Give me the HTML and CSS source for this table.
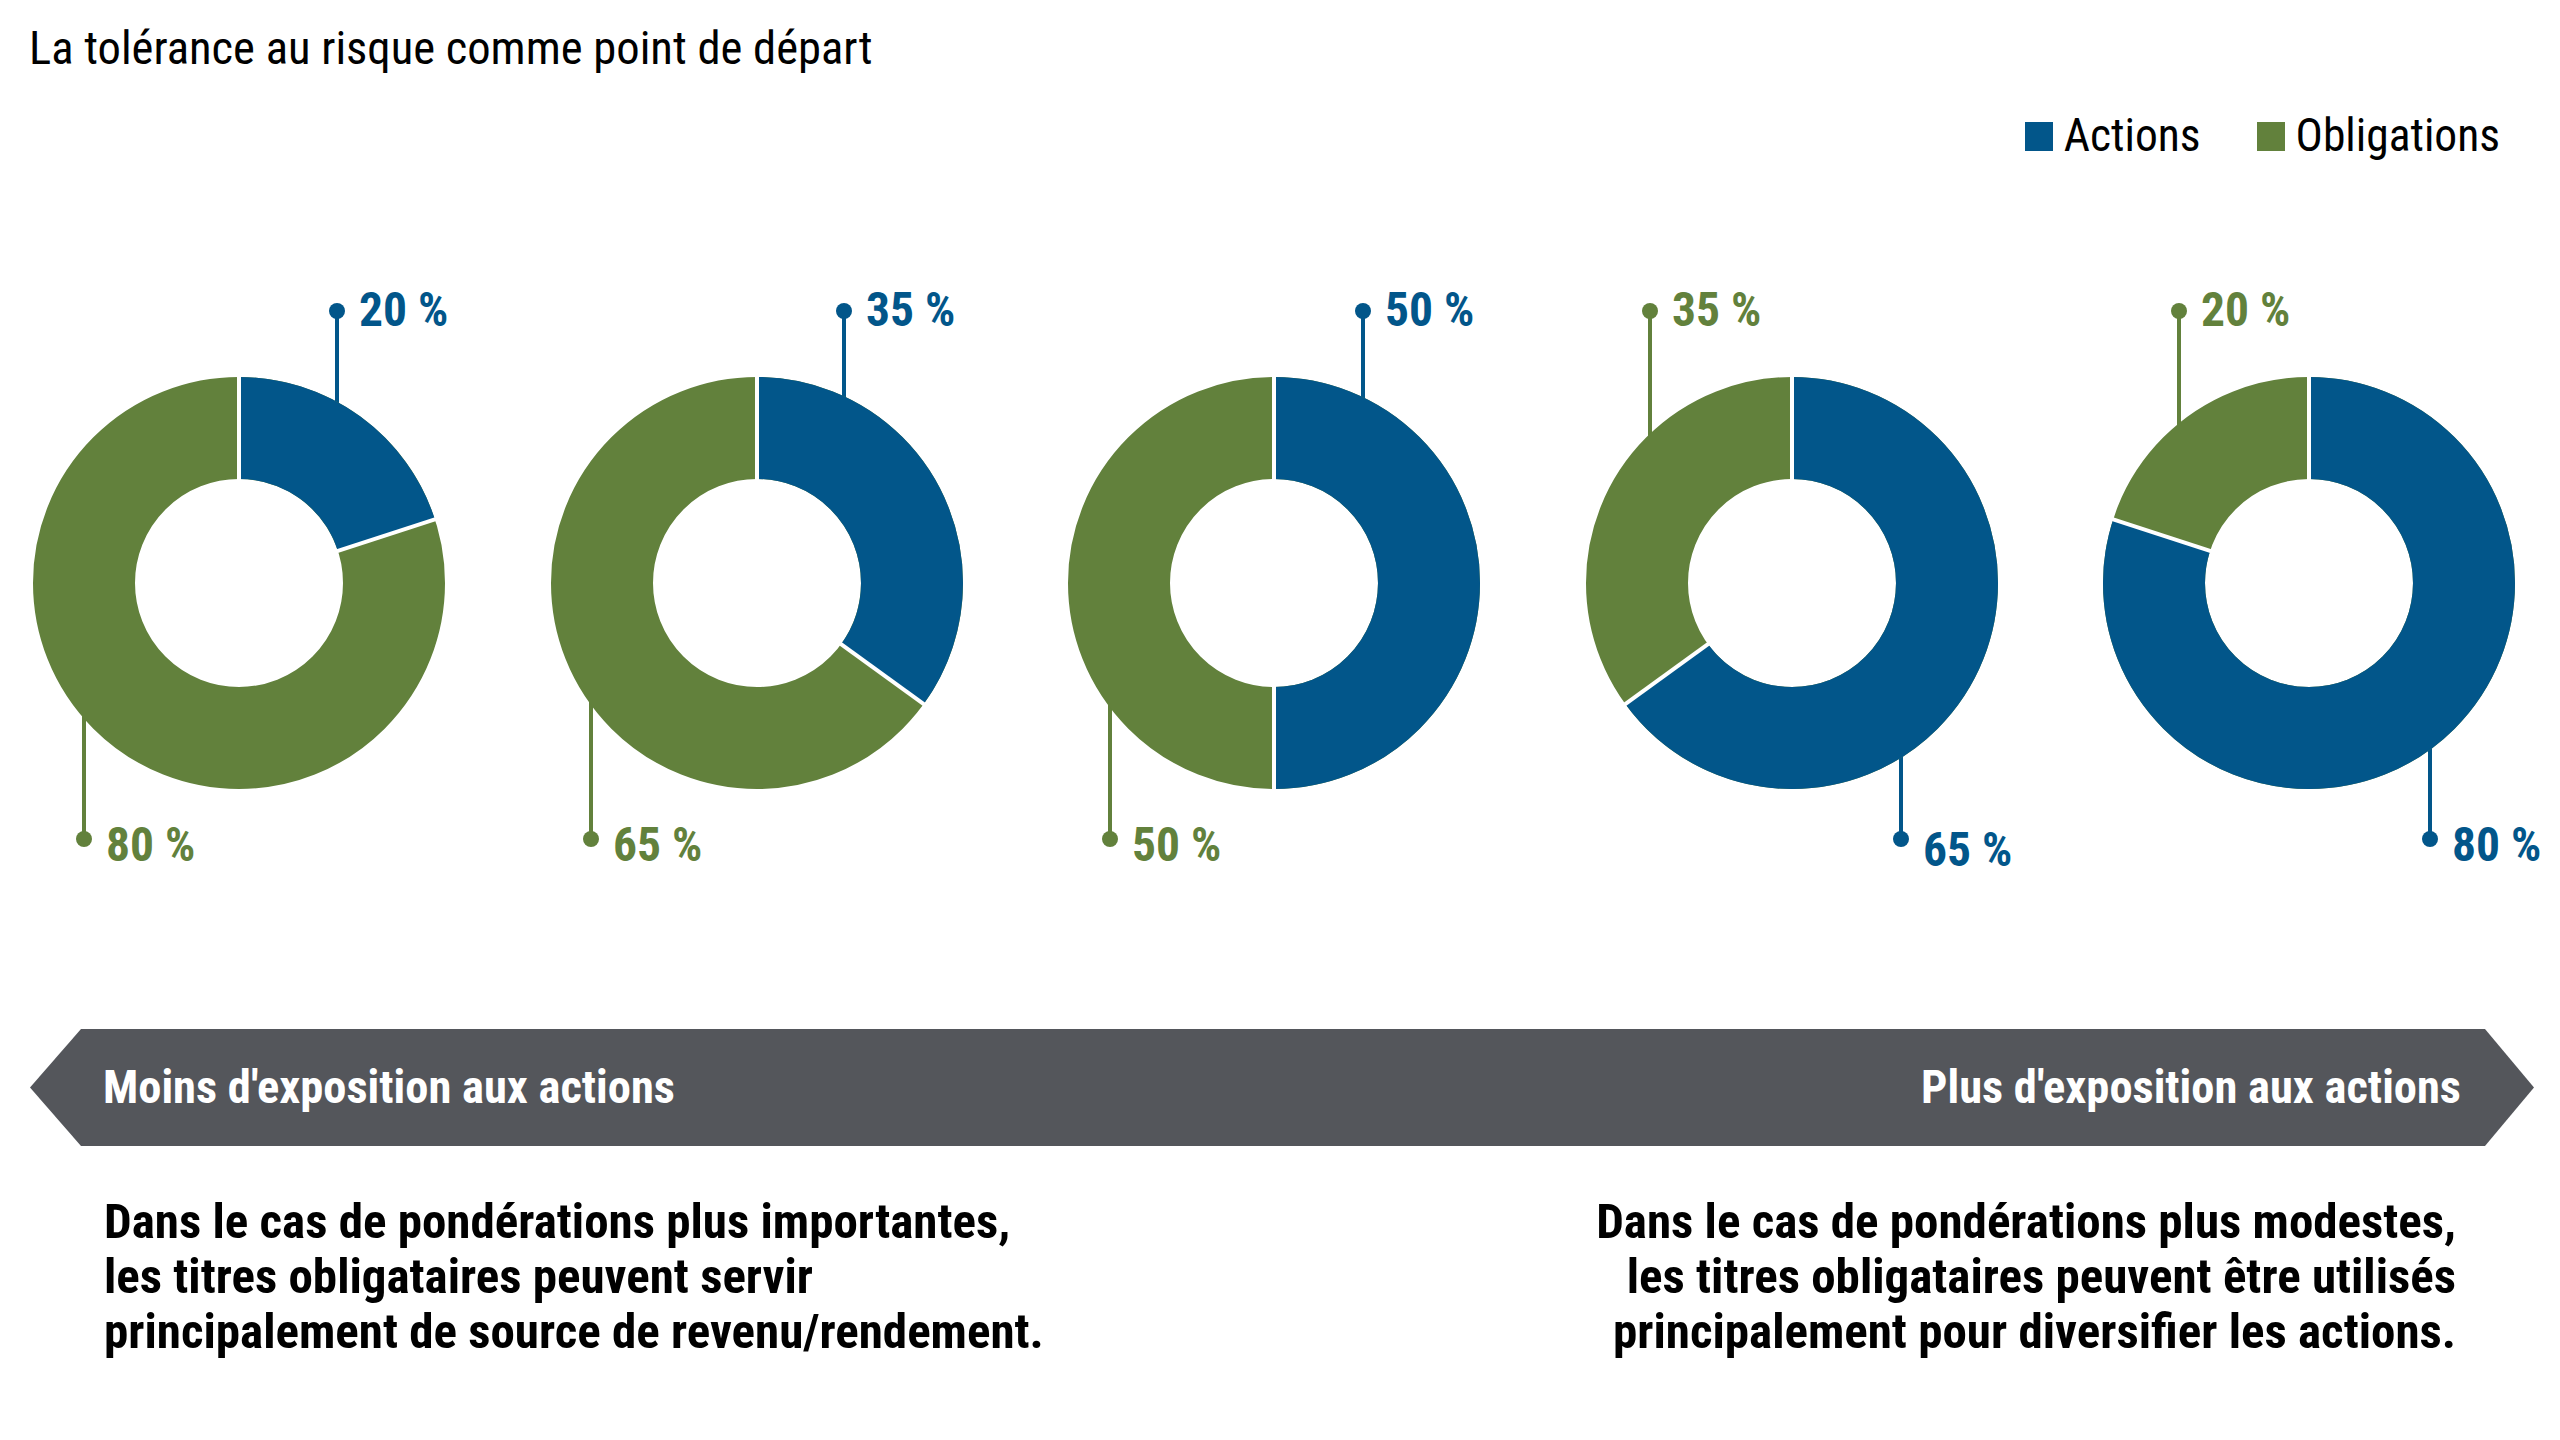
FILE: index.html
```html
<!DOCTYPE html>
<html lang="fr">
<head>
<meta charset="utf-8">
<title>La tolérance au risque comme point de départ</title>
<link rel="stylesheet" href="styles.css">
</head>
<body>
<div class="page">
  <h1 class="title">La tolérance au risque comme point de départ</h1>

  <div class="legend">
    <span class="legend-item"><span class="swatch swatch-blue"></span>Actions</span>
    <span class="legend-item"><span class="swatch swatch-green"></span>Obligations</span>
  </div>

  <div class="charts">
    <!-- 20 / 80 -->
    <svg class="donut" viewBox="0 0 412 600">
      <line class="lead lead-blue" x1="304" y1="34" x2="304" y2="135"/>
      <circle class="dot-blue" cx="304" cy="34" r="8"/>
      <line class="lead lead-green" x1="51" y1="432" x2="51" y2="562"/>
      <circle class="dot-green" cx="51" cy="562" r="8"/>
      <circle class="ring ring-green" cx="206" cy="306" r="155"/>
      <circle class="ring ring-blue" cx="206" cy="306" r="155" pathLength="100" stroke-dasharray="20 80" transform="rotate(-90 206 306)"/>
      <line class="sep" x1="206" y1="206" x2="206" y2="96"/>
      <line class="sep" x1="301.1" y1="275.1" x2="405.7" y2="241.1"/>
      <text class="pct pct-blue" x="326" y="49">20 %</text>
      <text class="pct pct-green" x="73" y="584">80 %</text>
    </svg>

    <!-- 35 / 65 -->
    <svg class="donut" viewBox="0 0 412 600">
      <line class="lead lead-blue" x1="293" y1="34" x2="293" y2="130"/>
      <circle class="dot-blue" cx="293" cy="34" r="8"/>
      <line class="lead lead-green" x1="40" y1="418" x2="40" y2="562"/>
      <circle class="dot-green" cx="40" cy="562" r="8"/>
      <circle class="ring ring-green" cx="206" cy="306" r="155"/>
      <circle class="ring ring-blue" cx="206" cy="306" r="155" pathLength="100" stroke-dasharray="35 65" transform="rotate(-90 206 306)"/>
      <line class="sep" x1="206" y1="206" x2="206" y2="96"/>
      <line class="sep" x1="286.9" y1="364.8" x2="375.9" y2="429.4"/>
      <text class="pct pct-blue" x="315" y="49">35 %</text>
      <text class="pct pct-green" x="62" y="584">65 %</text>
    </svg>

    <!-- 50 / 50 -->
    <svg class="donut" viewBox="0 0 412 600">
      <line class="lead lead-blue" x1="295" y1="34" x2="295" y2="130"/>
      <circle class="dot-blue" cx="295" cy="34" r="8"/>
      <line class="lead lead-green" x1="42" y1="420" x2="42" y2="562"/>
      <circle class="dot-green" cx="42" cy="562" r="8"/>
      <circle class="ring ring-green" cx="206" cy="306" r="155"/>
      <circle class="ring ring-blue" cx="206" cy="306" r="155" pathLength="100" stroke-dasharray="50 50" transform="rotate(-90 206 306)"/>
      <line class="sep" x1="206" y1="206" x2="206" y2="96"/>
      <line class="sep" x1="206" y1="406" x2="206" y2="516"/>
      <text class="pct pct-blue" x="317" y="49">50 %</text>
      <text class="pct pct-green" x="64" y="584">50 %</text>
    </svg>

    <!-- 65 / 35 -->
    <svg class="donut" viewBox="0 0 412 600">
      <line class="lead lead-green" x1="64" y1="34" x2="64" y2="167"/>
      <circle class="dot-green" cx="64" cy="34" r="8"/>
      <line class="lead lead-blue" x1="315" y1="470" x2="315" y2="562"/>
      <circle class="dot-blue" cx="315" cy="562" r="8"/>
      <circle class="ring ring-green" cx="206" cy="306" r="155"/>
      <circle class="ring ring-blue" cx="206" cy="306" r="155" pathLength="100" stroke-dasharray="65 35" transform="rotate(-90 206 306)"/>
      <line class="sep" x1="206" y1="206" x2="206" y2="96"/>
      <line class="sep" x1="125.1" y1="364.8" x2="36.1" y2="429.4"/>
      <text class="pct pct-green" x="86" y="49">35 %</text>
      <text class="pct pct-blue" x="337" y="589">65 %</text>
    </svg>

    <!-- 80 / 20 -->
    <svg class="donut" viewBox="0 0 412 600">
      <line class="lead lead-green" x1="76" y1="34" x2="76" y2="156"/>
      <circle class="dot-green" cx="76" cy="34" r="8"/>
      <line class="lead lead-blue" x1="327" y1="462" x2="327" y2="562"/>
      <circle class="dot-blue" cx="327" cy="562" r="8"/>
      <circle class="ring ring-green" cx="206" cy="306" r="155"/>
      <circle class="ring ring-blue" cx="206" cy="306" r="155" pathLength="100" stroke-dasharray="80 20" transform="rotate(-90 206 306)"/>
      <line class="sep" x1="206" y1="206" x2="206" y2="96"/>
      <line class="sep" x1="110.9" y1="275.1" x2="6.3" y2="241.1"/>
      <text class="pct pct-green" x="98" y="49">20 %</text>
      <text class="pct pct-blue" x="349" y="584">80 %</text>
    </svg>
  </div>

  <div class="scale">
    <span>Moins d'exposition aux actions</span>
    <span>Plus d'exposition aux actions</span>
  </div>

  <div class="notes">
    <p class="note">Dans le cas de pondérations plus importantes,<br>les titres obligataires peuvent servir<br>principalement de source de revenu/rendement.</p>
    <p class="note note-right">Dans le cas de pondérations plus modestes,<br>les titres obligataires peuvent être utilisés<br>principalement pour diversifier les actions.</p>
  </div>
</div>
</body>
</html>
```

FILE: styles.css
```css
html, body {
  margin: 0;
  padding: 0;
  background: #ffffff;
}

body {
  width: 2560px;
  font-family: "Roboto Condensed", "Roboto", "Liberation Sans Narrow", sans-serif;
  font-stretch: condensed;
  color: #000000;
}

.page {
  padding-top: 25px;
}

.title {
  margin: 0 0 0 29px;
  font-size: 46.6px;
  line-height: 46px;
  font-weight: 400;
}

.legend {
  display: flex;
  justify-content: flex-end;
  gap: 56px;
  margin-top: 40px;
  padding-right: 60px;
  font-size: 45.5px;
  line-height: 49px;
  font-weight: 400;
}

.legend-item {
  white-space: nowrap;
}

.swatch {
  display: inline-block;
  width: 28px;
  height: 29px;
  margin-right: 11px;
  vertical-align: baseline;
}

.swatch-blue { background: #02568a; }
.swatch-green { background: #62813c; }

.charts {
  display: flex;
  gap: 105.5px;
  margin-top: 117px;
  padding-left: 33px;
}

.donut {
  display: block;
  flex: none;
  width: 412px;
  height: 600px;
  overflow: visible;
}

.ring {
  fill: none;
  stroke-width: 102;
}

.ring-green { stroke: #62813c; }
.ring-blue { stroke: #02568a; }

.sep {
  stroke: #ffffff;
  stroke-width: 4;
}

.lead {
  stroke-width: 4;
}

.lead-blue { stroke: #02568a; }
.lead-green { stroke: #62813c; }
.dot-blue { fill: #02568a; }
.dot-green { fill: #62813c; }

.pct {
  font-family: "Roboto Condensed", "Roboto", "Liberation Sans Narrow", sans-serif;
  font-stretch: condensed;
  font-size: 47.5px;
  font-weight: 700;
}

.pct-blue { fill: #02568a; }
.pct-green { fill: #62813c; }

.scale {
  display: flex;
  justify-content: space-between;
  align-items: center;
  height: 117px;
  margin: 152px 26px 0 30px;
  padding: 0 73px;
  background: #54565b;
  color: #ffffff;
  font-size: 46.5px;
  line-height: 49px;
  font-weight: 700;
  clip-path: polygon(51px 0, calc(100% - 49px) 0, 100% 50%, calc(100% - 49px) 100%, 51px 100%, 0 50%);
}

.notes {
  display: flex;
  justify-content: space-between;
  margin-top: 47.5px;
  padding: 0 104px 0 104px;
  font-size: 49px;
  line-height: 55px;
  font-weight: 700;
}

.note {
  margin: 0;
  white-space: nowrap;
}

.note-right {
  text-align: right;
}
```
